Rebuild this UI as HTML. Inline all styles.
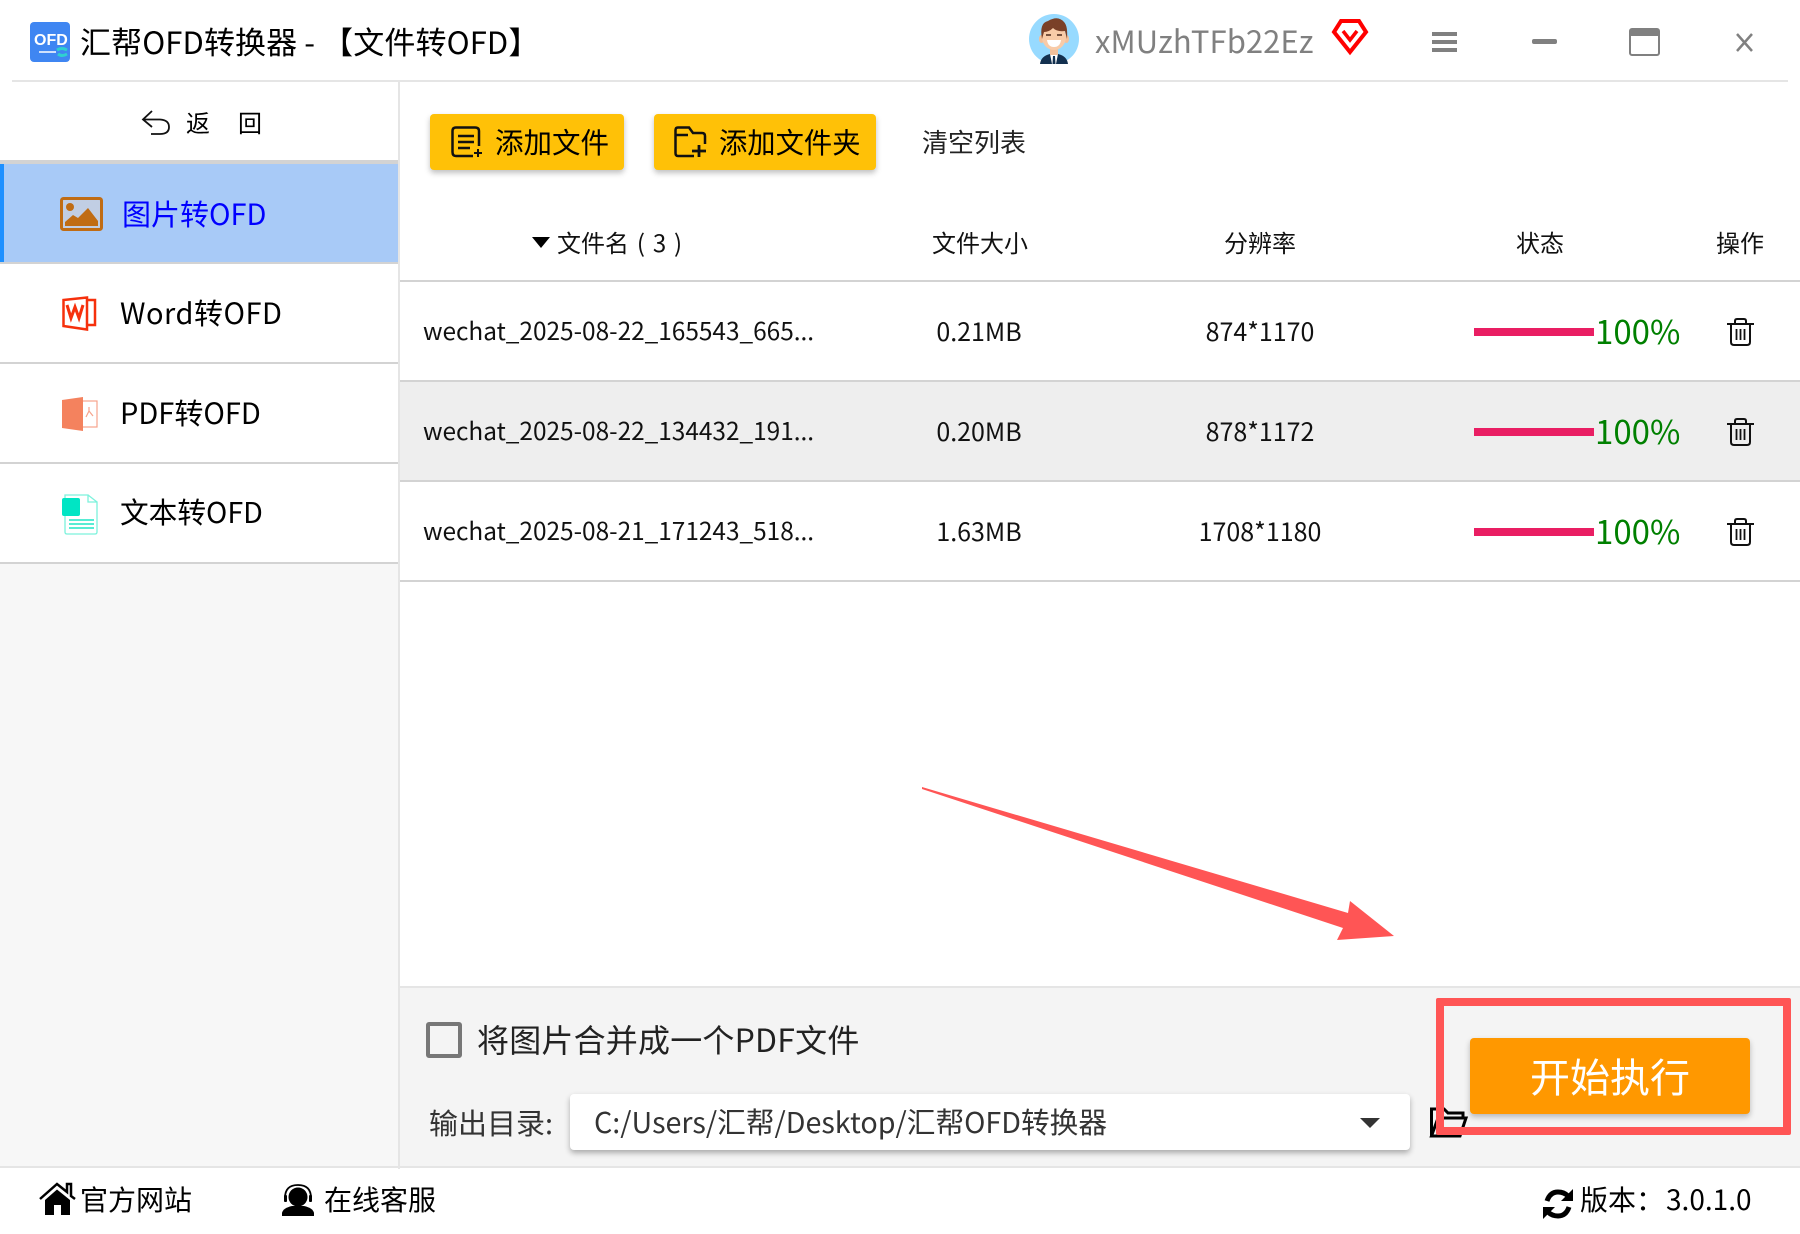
<!DOCTYPE html>
<html lang="zh"><head><meta charset="utf-8"><title>汇帮OFD转换器</title>
<style>
html,body{margin:0;padding:0;background:#fff}
#p{position:relative;width:1800px;height:1234px;overflow:hidden;background:#fff;font-family:"Noto Sans CJK SC","Liberation Sans",sans-serif;color:#000}
.b{position:absolute}
.t{position:absolute;white-space:nowrap;line-height:40px;height:40px}
.c{transform:translateX(-50%)}
svg{position:absolute;overflow:visible}
</style></head><body><div id="p">
<svg width="0" height="0"><defs>
<g id="tr" fill="none" stroke="#111" stroke-width="2"><path d="M1 6H28"/><path d="M9 6V3Q9 1 11 1H18Q20 1 20 3V6"/><path d="M5 6V24Q5 27 8 27H21Q24 27 24 24V6"/><path d="M10.500 11V22M14.500 11V22M18.500 11V22" stroke-width="1.800"/></g>
</defs></svg>

<!-- title bar -->
<div class="b" style="left:12px;top:80px;width:1776px;height:2px;background:#e5e5e5"></div>
<div class="b" style="left:30px;top:22px;width:40px;height:40px;border-radius:4px;background:#3f86f2"></div>
<div class="t" style="left:34px;top:22px;width:32px;text-align:center;color:#fff;font-size:16px;font-weight:700;line-height:38px;font-family:'Liberation Sans',sans-serif">OFD</div>
<svg style="left:30px;top:22px" width="40" height="40"><path d="M9 30H26" stroke="#fff" stroke-width="1.500"/><path d="M27 28Q32 25 37 28M37 32Q32 35 28 32" fill="none" stroke="#2fd0d0" stroke-width="3"/></svg>
<div class="t" style="left:80px;top:21px;font-size:31px;color:#000;letter-spacing:.1px">汇帮OFD转换器 - 【文件转OFD】</div>

<svg style="left:1029px;top:14px" width="50" height="50" viewBox="0 0 50 50">
<circle cx="25" cy="25" r="25" fill="#97daff"/>
<path d="M11 50Q12 42 21 40H29Q38 42 39 50Z" fill="#13304f"/><path d="M21 40H29L27 50H23Z" fill="#fff"/><path d="M24 42H26L26.500 50H23.500Z" fill="#13304f"/>
<rect x="21" y="33" width="8" height="8" fill="#f3c09a"/>
<ellipse cx="12.500" cy="25" rx="2.500" ry="4" fill="#f3c09a"/><ellipse cx="37.500" cy="25" rx="2.500" ry="4" fill="#f3c09a"/>
<ellipse cx="25" cy="23" rx="12" ry="13" fill="#f8cba8"/>
<path d="M13 25Q10 9 19 7Q29 1 35 8Q39 12 38 25L36 17Q28 18 24 14Q20 18 15 18Z" fill="#7a4028"/>
<path d="M18 26H32Q31 33 25 33Q19 33 18 26Z" fill="#fff"/>
<path d="M17 21H22M28 21H33" stroke="#4a2a1c" stroke-width="1.500"/>
</svg>
<div class="t" style="left:1095px;top:20px;font-size:31px;color:#808080;letter-spacing:.05px">xMUzhTFb22Ez</div>
<svg style="left:1332px;top:19px" width="36" height="35" viewBox="0 0 36 35"><path d="M9 2H27L34 13L18 33L2 13Z" fill="none" stroke="#f00" stroke-width="4" stroke-linejoin="miter"/><path d="M11 12L18 21L25 12" fill="none" stroke="#f00" stroke-width="3.500"/></svg>
<div class="b" style="left:1432px;top:32px;width:25px;height:4px;background:#808080"></div>
<div class="b" style="left:1432px;top:40px;width:25px;height:4px;background:#808080"></div>
<div class="b" style="left:1432px;top:48px;width:25px;height:4px;background:#808080"></div>
<div class="b" style="left:1532px;top:39px;width:25px;height:5px;background:#808080;border-radius:2px"></div>
<svg style="left:1629px;top:28px" width="31" height="28"><rect x="1" y="1" width="29" height="26" rx="2" fill="#fff" stroke="#808080" stroke-width="2"/><path d="M1 3Q1 1 3 1H28Q30 1 30 3V8H1Z" fill="#808080"/></svg>
<svg style="left:1735px;top:33px" width="19" height="19"><path d="M2 1L17 18M17 1L2 18" stroke="#808080" stroke-width="2.500"/></svg>

<!-- sidebar -->
<div class="b" style="left:0;top:82px;width:398px;height:1085px;background:#f7f7f7"></div>
<div class="b" style="left:398px;top:82px;width:2px;height:1087px;background:#e5e5e5"></div>
<div class="b" style="left:0;top:82px;width:398px;height:78px;background:#fff"></div>
<svg style="left:142px;top:110px" width="29" height="26" fill="none" stroke="#111" stroke-width="1.800"><path d="M10 1L1 9.500L10 17"/><path d="M1 9.500H18Q27 10 27 17Q27 24 18 24H9"/></svg>
<div class="t" style="left:186px;top:102px;font-size:24px">返</div>
<div class="t" style="left:238px;top:102px;font-size:24px">回</div>
<div class="b" style="left:0;top:160px;width:398px;height:4px;background:#d3d3d3"></div>
<div class="b" style="left:0;top:164px;width:398px;height:98px;background:#a8caf7"></div>
<div class="b" style="left:0;top:164px;width:4px;height:98px;background:#1e90ff"></div>
<div class="b" style="left:0;top:262px;width:398px;height:2px;background:#d3d3d3"></div>
<svg style="left:60px;top:197px" width="43" height="34" viewBox="0 0 43 34"><rect x="1.500" y="1.500" width="40" height="31" rx="2" fill="#f0d6c0" fill-opacity=".35" stroke="#c06c14" stroke-width="3"/><circle cx="10" cy="10" r="4" fill="#c06c14"/><path d="M5 29V25L13 18L18 21L28 11L38 24V29Z" fill="#c06c14"/></svg>
<div class="t" style="left:122px;top:193px;font-size:29px;color:#00f">图片转OFD</div>

<div class="b" style="left:0;top:264px;width:398px;height:98px;background:#fff"></div>
<div class="b" style="left:0;top:362px;width:398px;height:2px;background:#d3d3d3"></div>
<svg style="left:62px;top:296px" width="35" height="35" viewBox="0 0 35 35"><path d="M1.500 4L25 1.500V33.500L1.500 30Z" fill="none" stroke="#f6300c" stroke-width="2.500"/><path d="M25 4H33V29H25" fill="none" stroke="#f6300c" stroke-width="2.500"/><path d="M5 9L9 22L13 11L17 22L21 9" fill="none" stroke="#f6300c" stroke-width="3"/></svg>
<div class="t" style="left:120px;top:292px;font-size:29px;letter-spacing:.5px">Word转OFD</div>

<div class="b" style="left:0;top:364px;width:398px;height:98px;background:#fff"></div>
<div class="b" style="left:0;top:462px;width:398px;height:2px;background:#d3d3d3"></div>
<svg style="left:62px;top:397px" width="36" height="35" viewBox="0 0 36 35"><rect x="20" y="4" width="15" height="26" fill="#fff" stroke="#f6a48c" stroke-width="1.200"/><path d="M0 3L21 0V34L0 31Z" fill="#f4825e"/><path d="M27 10V14L24 20M27 14L31 19" fill="none" stroke="#f6a48c" stroke-width="1.200"/></svg>
<div class="t" style="left:120px;top:392px;font-size:29px">PDF转OFD</div>

<div class="b" style="left:0;top:464px;width:398px;height:98px;background:#fff"></div>
<div class="b" style="left:0;top:562px;width:398px;height:2px;background:#d3d3d3"></div>
<svg style="left:62px;top:494px" width="37" height="41" viewBox="0 0 37 41"><path d="M3 1H26V8H35V38Q35 40 33 40H5Q3 40 3 38Z M26 1L35 8" fill="#fff" stroke="#7cf2dc" stroke-width="1.300"/><rect x="0" y="4" width="18" height="18" rx="2" fill="#00e5c4"/><path d="M7 26H32M7 30H32M7 34H32" stroke="#1fe6c6" stroke-width="1.500"/></svg>
<div class="t" style="left:120px;top:492px;font-size:28.700px">文本转OFD</div>

<!-- toolbar -->
<div class="b" style="left:430px;top:114px;width:194px;height:56px;background:#ffc107;border-radius:4px;box-shadow:0 3px 6px rgba(0,0,0,.25)"></div>
<svg style="left:451px;top:126px" width="32" height="32" viewBox="0 0 32 32" fill="none" stroke="#111" stroke-width="2.500"><path d="M22 30H5Q1.500 30 1.500 26V5Q1.500 1.500 5 1.500H24Q28 1.500 28 5V20"/><path d="M7 10H23M7 16H23M7 22H19"/><path d="M27 23V31M23 27H31" stroke-width="2"/></svg>
<div class="t" style="left:495px;top:122px;font-size:28.500px">添加文件</div>
<div class="b" style="left:654px;top:114px;width:222px;height:56px;background:#ffc107;border-radius:4px;box-shadow:0 3px 6px rgba(0,0,0,.25)"></div>
<svg style="left:674px;top:126px" width="33" height="32" viewBox="0 0 33 32" fill="none" stroke="#111" stroke-width="2.500"><path d="M20 30H4Q1.500 30 1.500 27V4Q1.500 1.500 4 1.500H15L19 7H28Q31 7 31 10V18"/><path d="M1.500 9H14"/><path d="M25 19V31M18 25H32" stroke-width="2.800"/></svg>
<div class="t" style="left:719px;top:122px;font-size:28.300px">添加文件夹</div>
<div class="t" style="left:922px;top:122px;font-size:26px;color:#222">清空列表</div>

<!-- table -->
<svg style="left:532px;top:237px" width="18" height="11"><path d="M0 0H18L9 11Z" fill="#000"/></svg>
<div class="t" style="left:557px;top:222px;font-size:24px;color:#111;word-spacing:2.500px">文件名 ( 3 )</div>
<div class="t c" style="left:980px;top:222px;font-size:24px;color:#111">文件大小</div>
<div class="t c" style="left:1260px;top:222px;font-size:24px;color:#111">分辨率</div>
<div class="t c" style="left:1540px;top:222px;font-size:24px;color:#111">状态</div>
<div class="t c" style="left:1740px;top:222px;font-size:24px;color:#111">操作</div>
<div class="b" style="left:400px;top:280px;width:1400px;height:2px;background:#d3d3d3"></div>

<div class="b" style="left:400px;top:380px;width:1400px;height:2px;background:#d3d3d3"></div>
<div class="b" style="left:400px;top:382px;width:1400px;height:98px;background:#eee"></div>
<div class="b" style="left:400px;top:480px;width:1400px;height:2px;background:#d3d3d3"></div>
<div class="b" style="left:400px;top:580px;width:1400px;height:2px;background:#d3d3d3"></div>

<div class="t" style="left:423px;top:311px;font-size:24.400px;color:#111">wechat_2025-08-22_165543_665...</div>
<div class="t c" style="left:979px;top:311px;font-size:25px;color:#111">0.21MB</div>
<div class="t c" style="left:1260px;top:311px;font-size:25px;color:#111">874*1170</div>
<div class="b" style="left:1474px;top:328px;width:120px;height:8px;background:#e91e63"></div>
<div class="t" style="left:1595px;top:310px;font-size:33px;color:#008000">100%</div>
<svg style="left:1726px;top:318px" width="29" height="28"><use href="#tr"/></svg>

<div class="t" style="left:423px;top:411px;font-size:24.400px;color:#111">wechat_2025-08-22_134432_191...</div>
<div class="t c" style="left:979px;top:411px;font-size:25px;color:#111">0.20MB</div>
<div class="t c" style="left:1260px;top:411px;font-size:25px;color:#111">878*1172</div>
<div class="b" style="left:1474px;top:428px;width:120px;height:8px;background:#e91e63"></div>
<div class="t" style="left:1595px;top:410px;font-size:33px;color:#008000">100%</div>
<svg style="left:1726px;top:418px" width="29" height="28"><use href="#tr"/></svg>

<div class="t" style="left:423px;top:511px;font-size:24.400px;color:#111">wechat_2025-08-21_171243_518...</div>
<div class="t c" style="left:979px;top:511px;font-size:25px;color:#111">1.63MB</div>
<div class="t c" style="left:1260px;top:511px;font-size:25px;color:#111">1708*1180</div>
<div class="b" style="left:1474px;top:528px;width:120px;height:8px;background:#e91e63"></div>
<div class="t" style="left:1595px;top:510px;font-size:33px;color:#008000">100%</div>
<svg style="left:1726px;top:518px" width="29" height="28"><use href="#tr"/></svg>

<!-- bottom panel -->
<div class="b" style="left:400px;top:986px;width:1400px;height:2px;background:#e5e5e5"></div>
<div class="b" style="left:400px;top:988px;width:1400px;height:178px;background:#f4f4f4"></div>
<div class="b" style="left:0;top:1166px;width:1800px;height:2px;background:#e5e5e5"></div>
<div class="b" style="left:426px;top:1022px;width:28px;height:28px;border:4px solid #777;border-radius:3px"></div>
<div class="t" style="left:477px;top:1019px;font-size:32px;color:#222;letter-spacing:.2px">将图片合并成一个PDF文件</div>
<div class="t" style="left:429px;top:1102px;font-size:29px;color:#333">输出目录:</div>
<div class="b" style="left:570px;top:1094px;width:840px;height:56px;background:#fff;border-radius:4px;box-shadow:0 3px 6px rgba(0,0,0,.3)"></div>
<div class="t" style="left:594px;top:1102px;font-size:28.700px;color:#333">C:/Users/汇帮/Desktop/汇帮OFD转换器</div>
<svg style="left:1360px;top:1118px" width="20" height="10"><path d="M0 0H20L10 10Z" fill="#333"/></svg>
<svg style="left:1430px;top:1107px" width="37" height="30" viewBox="0 0 37 30" fill="none" stroke="#000" stroke-width="3"><path d="M1.500 29V2H14L18 6H33V11"/><path d="M1.500 29H30L36 11H8L1.500 29Z"/></svg>
<div class="b" style="left:1470px;top:1038px;width:280px;height:76px;background:#ff9800;border-radius:4px;box-shadow:0 3px 6px rgba(0,0,0,.25)"></div>
<div class="t" style="left:1470px;top:1055px;width:280px;text-align:center;font-size:40px;color:#fff">开始执行</div>
<div class="b" style="left:1436px;top:998px;width:339px;height:121px;border:8px solid #f55;border-radius:2px"></div>

<!-- arrow -->
<svg style="left:0;top:0" width="1800" height="1234"><path d="M922 787L1348 913L1350 901L1394 936L1337 940L1343 928L922 789Z" fill="#f55"/></svg>

<!-- footer -->
<svg style="left:40px;top:1183px" width="36" height="33" viewBox="0 0 36 33"><path d="M0 16L17 1L27 9V1H31V13L35 16" fill="none" stroke="#000" stroke-width="2.500"/><path d="M5 17L17 6.500L30 17V32H21V22H14V32H5Z" fill="#000"/></svg>
<div class="t" style="left:80px;top:1179px;font-size:28px">官方网站</div>
<svg style="left:282px;top:1184px" width="32" height="32" viewBox="0 0 32 32"><path d="M3 14Q3 1 16 1Q29 1 29 14" fill="none" stroke="#000" stroke-width="1.800"/><circle cx="16" cy="13" r="9.500" fill="#000"/><rect x="2" y="11" width="3" height="7" rx="1" fill="#000"/><rect x="27" y="11" width="3" height="7" rx="1" fill="#000"/><path d="M0 32V29Q1 24 10 22H22Q31 24 32 29V32Z" fill="#000"/></svg>
<div class="t" style="left:324px;top:1179px;font-size:28px">在线客服</div>
<svg style="left:1542px;top:1188px" width="32" height="32" viewBox="0 0 32 32" fill="none"><path d="M5 13Q8 4 16 4Q22 4 26 8" stroke="#000" stroke-width="5"/><path d="M31 1V13H19Z" fill="#000"/><path d="M27 19Q24 28 16 28Q10 28 6 24" stroke="#000" stroke-width="5"/><path d="M1 31V19H13Z" fill="#000"/></svg>
<div class="t" style="left:1580px;top:1179px;font-size:28px">版本：</div>
<div class="t" style="left:1666px;top:1179px;font-size:28px">3.0.1.0</div>
</div></body></html>
